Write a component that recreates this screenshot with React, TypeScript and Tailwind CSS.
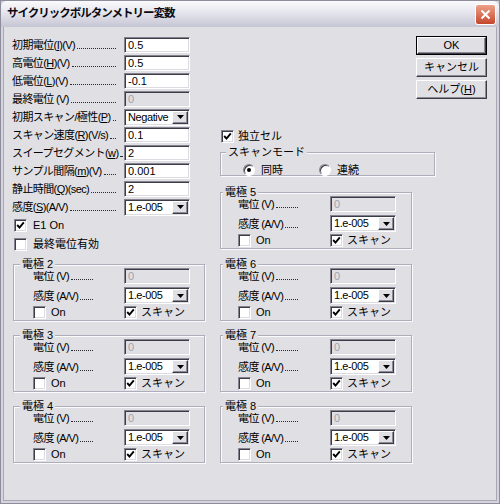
import React from 'react'

const face = 'bg-[#e0dfe3]'
const sunken =
  'border border-t-[#84838f] border-l-[#84838f] border-b-white border-r-white shadow-[inset_1px_1px_0_#3c3c46,inset_-1px_-1px_0_#dcdbe2]'
const raised =
  'border border-t-white border-l-white border-b-[#3c3c46] border-r-[#3c3c46] shadow-[inset_-1px_-1px_0_#8b8a96]'

// label followed by a dotted leader that fills the rest of the width
function Leader({ children, w = 'w-[104px]' }: { children: React.ReactNode; w?: string }) {
  return (
    <div className={`flex items-end whitespace-nowrap ${w}`}>
      <span className="shrink-0 tracking-[-0.6px] leading-[14px]">{children}</span>
      <span className="ml-[2px] mb-[3px] min-w-0 flex-1 border-b border-dotted border-[#2a2a30]" />
    </div>
  )
}

function TextBox({ value, disabled }: { value: string; disabled?: boolean }) {
  return (
    <div
      className={`w-[66px] h-[16px] ${sunken} ${
        disabled ? 'bg-[#e0dfe3] text-[#a3a2ad]' : 'bg-white text-black'
      } flex items-center pl-[3px] text-[11px] leading-[13px]`}
    >
      {value}
    </div>
  )
}

function Combo({ value }: { value: string }) {
  return (
    <div className={`w-[66px] h-[17px] ${sunken} bg-white flex items-center pl-[3px] pr-[1px] text-[11px] leading-[13px]`}>
      <span className="flex-1 min-w-0 whitespace-nowrap tracking-[-0.4px]">{value}</span>
      <span className={`w-[16px] h-[13px] shrink-0 ${face} ${raised} flex items-center justify-center`}>
        <svg width="7" height="4" viewBox="0 0 7 4">
          <path d="M0 0h7L3.5 4z" fill="#000" />
        </svg>
      </span>
    </div>
  )
}

function Check({ checked }: { checked?: boolean }) {
  return (
    <span className={`w-[13px] h-[13px] bg-white ${sunken} flex items-center justify-center shrink-0`}>
      {checked && (
        <svg width="9" height="9" viewBox="0 0 9 9">
          <path d="M1.2 4 L3.5 6.6 L7.8 1.4" stroke="#000" strokeWidth="1.9" fill="none" />
        </svg>
      )}
    </span>
  )
}

function Radio({ checked }: { checked?: boolean }) {
  return (
    <span className="w-[12px] h-[12px] rounded-full bg-white border border-t-[#84838f] border-l-[#84838f] border-b-white border-r-white shadow-[inset_1px_1px_0_#3c3c46] flex items-center justify-center shrink-0">
      {checked && <span className="w-[4px] h-[4px] rounded-full bg-black" />}
    </span>
  )
}

function Group({
  title,
  labelLeft,
  className,
  children,
}: {
  title: string
  labelLeft: string
  className?: string
  children: React.ReactNode
}) {
  return (
    <div className={`relative border border-[#aeadba] shadow-[inset_1px_1px_0_#fbfbfd,1px_1px_0_#fbfbfd] ${className ?? ''}`}>
      <span className={`absolute -top-[8px] ${labelLeft} px-[2px] ${face} text-[11px] leading-[14px]`}>{title}</span>
      {children}
    </div>
  )
}

function Electrode({ n, right }: { n: number; right?: boolean }) {
  const col = right ? 'w-[92px]' : 'w-[91px]'
  return (
    <Group
      title={`電極 ${n}`}
      labelLeft={right ? 'left-[2px]' : 'left-[6px]'}
      className={`w-[192px] h-[57px] pt-[3px] ${right ? 'pl-[17px]' : 'pl-[19px]'}`}
    >
      <div className="flex items-center h-[16px]">
        <div className={col}>
          <Leader w="w-[60px]">電位 (V)</Leader>
        </div>
        <TextBox value="0" disabled />
      </div>
      <div className="flex items-center mt-[3px]">
        <div className={col}>
          <Leader w="w-[60px]">感度 (A/V)</Leader>
        </div>
        <Combo value="1.e-005" />
      </div>
      <div className="flex items-center mt-[2px] h-[13px]">
        <div className={`${col} flex items-center gap-[5px]`}>
          <Check />
          <span>On</span>
        </div>
        <div className="flex items-center gap-[4px]">
          <Check checked />
          <span>スキャン</span>
        </div>
      </div>
    </Group>
  )
}

function Acc({ k }: { k: string }) {
  return (
    <>
      (<span className="underline">{k}</span>)
    </>
  )
}

const rows: { label: React.ReactNode; field: React.ReactNode }[] = [
  { label: <>初期電位<Acc k="I" />(V)</>, field: <TextBox value="0.5" /> },
  { label: <>高電位<Acc k="H" />(V)</>, field: <TextBox value="0.5" /> },
  { label: <>低電位<Acc k="L" />(V)</>, field: <TextBox value="-0.1" /> },
  { label: <>最終電位 (V)</>, field: <TextBox value="0" disabled /> },
  { label: <>初期スキャン/極性<Acc k="P" /></>, field: <Combo value="Negative" /> },
  { label: <>スキャン速度<Acc k="R" />(V/s)</>, field: <TextBox value="0.1" /> },
  { label: <>スイープセグメント<Acc k="w" /></>, field: <TextBox value="2" /> },
  { label: <>サンプル間隔<Acc k="m" />(V)</>, field: <TextBox value="0.001" /> },
  { label: <>静止時間<Acc k="Q" />(sec)</>, field: <TextBox value="2" /> },
  { label: <>感度<Acc k="S" />(A/V)</>, field: <Combo value="1.e-005" /> },
]

function Button({ children, primary }: { children: React.ReactNode; primary?: boolean }) {
  return (
    <div className={`w-[71px] h-[19px] ${primary ? 'border border-black' : ''}`}>
      <div className={`w-full h-full ${face} ${raised} flex items-center justify-center text-[11px] leading-[13px]`}>
        {children}
      </div>
    </div>
  )
}

export default function App() {
  return (
    <div className="w-[500px] h-[504px] flex flex-col bg-[#d4d3de] border border-[#8d8c9b] font-['Liberation_Sans','Noto_Sans_CJK_JP',sans-serif] text-[11px] text-black select-none overflow-hidden">
      {/* title bar */}
      <div className="h-[26px] shrink-0 flex items-center pl-[6px] pr-[3px] rounded-t-[6px] bg-linear-to-b from-[#fbfbfd] via-[#e2e2ea] to-[#c6c5d4]">
        <span className="flex-1 text-[11.5px] font-bold tracking-[-1px] text-[#0a0a14]">
          サイクリックボルタンメトリー変数
        </span>
        <span className="w-[21px] h-[21px] rounded-[3px] border border-white bg-linear-to-b from-[#eba188] to-[#c4452a] flex items-center justify-center">
          <svg width="13" height="13" viewBox="0 0 13 13">
            <path d="M2.5 2.5 L10.5 10.5 M10.5 2.5 L2.5 10.5" stroke="#fff" strokeWidth="2" />
          </svg>
        </span>
      </div>

      {/* body */}
      <div className={`flex-1 flex ${face} mx-[2px] mb-[2px] border-l border-r border-b border-[#a8a7b5] pl-[8px] pt-[9px]`}>
        {/* left column */}
        <div className="w-[193px] flex flex-col pt-[1px]">
          {rows.map((r, i) => (
            <div key={i} className="flex items-center h-[16px] mb-[2px]">
              <Leader w={i === 6 ? 'w-[110px]' : 'w-[104px]'}>{r.label}</Leader>
              <div className={i === 6 ? 'ml-[2px]' : 'ml-[8px]'}>{r.field}</div>
            </div>
          ))}
          <div className="flex items-center gap-[6px] mt-[2px] ml-[2px] h-[13px]">
            <Check checked />
            <span>E1 On</span>
          </div>
          <div className="flex items-center gap-[6px] mt-[6px] ml-[2px] h-[13px]">
            <Check />
            <span>最終電位有効</span>
          </div>
          <div className="ml-[1px] mt-[13px]">
            <Electrode n={2} />
          </div>
          <div className="ml-[1px] mt-[14px]">
            <Electrode n={3} />
          </div>
          <div className="ml-[1px] mt-[14px]">
            <Electrode n={4} />
          </div>
        </div>

        {/* right column */}
        <div className="w-[267px] ml-[15px] flex flex-col">
          <div className="self-end flex flex-col gap-[3px]">
            <Button primary>OK</Button>
            <Button>キャンセル</Button>
            <Button>
              ヘルプ<Acc k="H" />
            </Button>
          </div>
          <div className="flex items-center gap-[4px] mt-[31px] ml-[1px] h-[13px]">
            <Check checked />
            <span>独立セル</span>
          </div>
          <Group title="スキャンモード" labelLeft="left-[5px]" className="w-[215px] h-[24px] mt-[9px] pt-[9px] pl-[22px]">
            <div className="flex items-center">
              <div className="w-[76px] flex items-center gap-[6px]">
                <Radio checked />
                <span>同時</span>
              </div>
              <div className="flex items-center gap-[6px]">
                <Radio />
                <span>連続</span>
              </div>
            </div>
          </Group>
          <div className="mt-[16px]">
            <Electrode n={5} right />
          </div>
          <div className="mt-[15px]">
            <Electrode n={6} right />
          </div>
          <div className="mt-[14px]">
            <Electrode n={7} right />
          </div>
          <div className="mt-[14px]">
            <Electrode n={8} right />
          </div>
        </div>
      </div>
    </div>
  )
}
